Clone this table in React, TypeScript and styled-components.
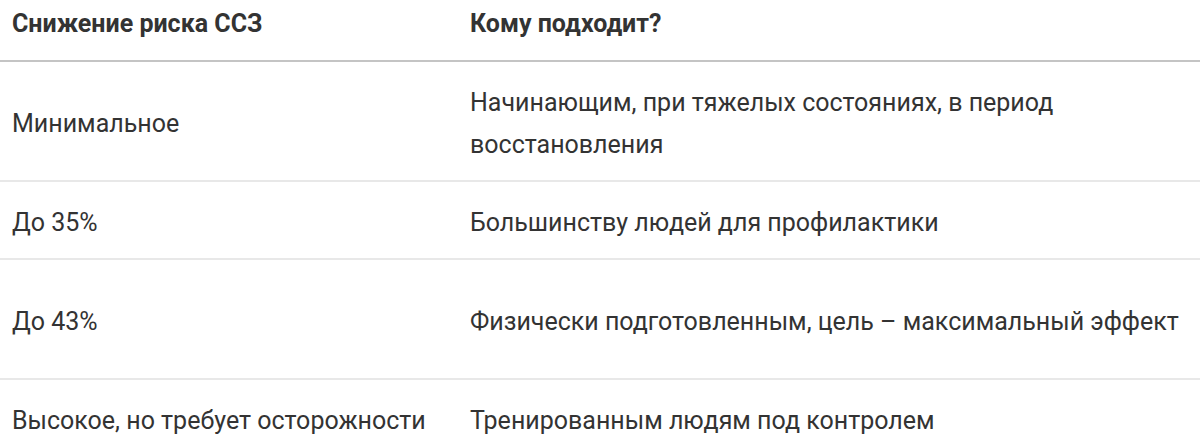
import React from 'react';
import styled, { createGlobalStyle } from 'styled-components';

const GlobalStyle = createGlobalStyle`
  body {
    margin: 0;
    background: #fff;
    font-family: Roboto, "Noto Sans", sans-serif;
    color: #333;
  }
`;

const Table = styled.div`
  display: grid;
  grid-template-columns: 458px 1fr;
  width: 1200px;
`;

const HeadCell = styled.div`
  padding: 3px 12px 15px;
  font-size: 25px;
  line-height: 42px;
  font-weight: 700;
  color: #333;
  border-bottom: 2px solid #c4c4c4;
`;

const Cell = styled.div<{ $tall?: boolean; $last?: boolean }>`
  display: flex;
  align-items: center;
  padding: 20px 12px 14px;
  min-height: ${(p) => (p.$tall ? '84px' : '42px')};
  font-size: 25px;
  line-height: 42px;
  color: #333;
  border-bottom: ${(p) => (p.$last ? 'none' : '2px solid #e8e8e8')};
`;

const rows = [
  {
    risk: 'Минимальное',
    who: 'Начинающим, при тяжелых состояниях, в период восстановления',
    tall: true,
  },
  { risk: 'До 35%', who: 'Большинству людей для профилактики' },
  { risk: 'До 43%', who: 'Физически подготовленным, цель – максимальный эффект', tall: true },
  { risk: 'Высокое, но требует осторожности', who: 'Тренированным людям под контролем' },
];

const App = () => {
  return (
    <>
      <GlobalStyle />
      <Table>
        <HeadCell>Снижение риска ССЗ</HeadCell>
        <HeadCell>Кому подходит?</HeadCell>
        {rows.map((row, i) => {
          const last = i === rows.length - 1;
          return (
            <React.Fragment key={row.risk}>
              <Cell $tall={row.tall} $last={last}>{row.risk}</Cell>
              <Cell $tall={row.tall} $last={last}>{row.who}</Cell>
            </React.Fragment>
          );
        })}
      </Table>
    </>
  );
};

export default App;
